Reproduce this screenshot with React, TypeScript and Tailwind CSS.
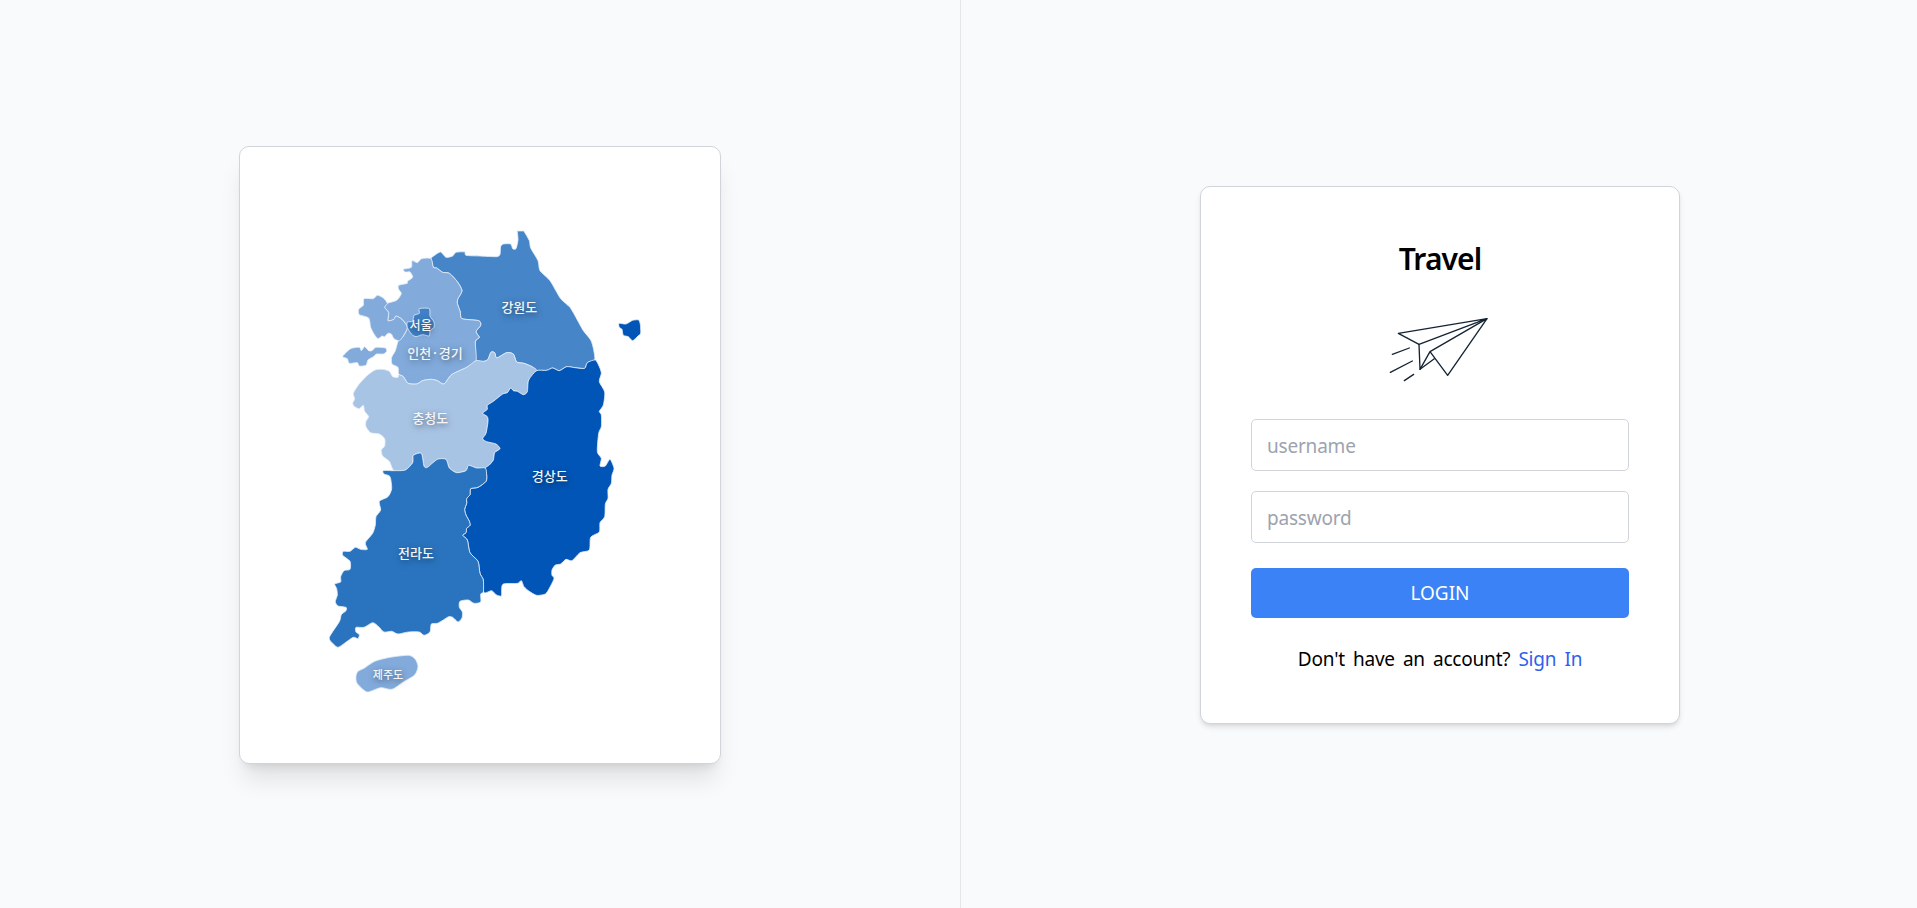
import React from "react";

type Point = [number, number];

const parse = (s: string): Point[] =>
  s.split(" ").map((p) => p.split(",").map(Number) as Point);

// Closed curve through all points, with slightly rounded corners.
const outline = (s: string): string => {
  const p = parse(s);
  const n = p.length;
  const k = 0.12;
  let d = `M${p[0][0]} ${p[0][1]}`;
  for (let i = 0; i < n; i++) {
    const a = p[(i + n - 1) % n];
    const b = p[i];
    const c = p[(i + 1) % n];
    const e = p[(i + 2) % n];
    d += `C${b[0] + (c[0] - a[0]) * k} ${b[1] + (c[1] - a[1]) * k} ${c[0] - (e[0] - b[0]) * k} ${c[1] - (e[1] - b[1]) * k} ${c[0]} ${c[1]}`;
  }
  return d + "Z";
};

const regions = [
  {
    id: "gangwon",
    fill: "#4685c8",
    points:
      "333,114 345,105 362,96 378,112 398,108 408,97 434,96 438,106 478,108 530,110 540,103 542,80 550,72 572,72 578,86 588,86 594,60 592,34 594,33 610,33 612,34 628,62 632,84 654,122 660,152 690,182 722,236 750,262 772,300 790,332 812,360 820,385 824,420 802,428 794,445 765,443 740,440 718,452 698,444 680,451 650,452 636,440 612,430 590,426 580,402 560,398 535,412 528,412 524,398 514,396 508,408 504,418 492,424 468,422 466,365 478,352 468,335 482,316 476,302 426,296 421,276 412,250 414,236 426,212 412,185 388,160 368,157 350,144 340,142 333,114",
  },
  {
    id: "gyeonggi",
    fill: "#82abdc",
    points:
      "333,116 305,116 292,128 276,122 274,142 250,148 256,156 270,156 278,172 262,184 262,190 236,196 236,208 244,220 238,232 228,242 202,250 194,262 206,278 204,302 222,298 228,288 246,298 262,322 250,348 235,362 226,392 215,412 216,432 234,442 236,462 250,470 264,490 290,492 308,482 332,478 352,482 372,492 395,464 440,442 468,422 466,365 478,352 468,335 482,316 476,302 426,296 421,276 412,250 414,236 426,212 412,185 388,160 368,157 350,144 340,142",
  },
  {
    id: "incheon",
    fill: "#82abdc",
    points:
      "202,250 190,234 172,226 160,236 132,236 130,256 116,268 118,284 146,294 152,322 162,342 174,356 186,348 194,350 204,340 214,342 222,356 238,362 250,348 262,322 246,298 228,288 222,298 204,302 206,278 194,262",
  },
  {
    id: "incheon-islands",
    fill: "#82abdc",
    points:
      "70,406 92,386 118,382 124,392 134,380 146,392 156,392 168,382 196,384 200,394 190,402 170,402 160,410 144,420 138,436 118,438 112,428 88,430 82,416 70,412",
  },
  {
    id: "seoul",
    fill: "#3f80c6",
    points:
      "262,306 278,304 282,286 298,280 298,266 328,266 330,288 342,306 342,322 330,332 328,348 308,344 288,350 274,342 262,322",
  },
  {
    id: "chungcheong",
    fill: "#a8c4e5",
    points:
      "188,448 165,450 140,468 116,494 100,520 104,536 98,550 104,560 118,566 130,556 134,574 146,590 138,604 138,620 152,638 178,642 194,656 194,678 184,690 188,708 208,724 222,752 256,750 278,728 280,706 304,700 312,738 322,742 352,718 378,718 388,744 410,758 438,752 446,736 470,744 496,744 508,735 520,720 524,698 540,686 528,672 500,665 488,656 498,640 504,605 502,590 488,580 502,568 502,556 520,544 548,522 562,518 572,504 580,512 592,514 610,524 622,515 626,480 650,452 636,440 612,430 590,426 580,402 560,398 535,412 528,412 524,398 514,396 508,408 504,418 492,424 468,422 440,442 395,464 372,492 352,482 332,478 308,482 290,492 264,490 250,470 236,464 234,472 218,470 208,454",
  },
  {
    id: "gyeongsang",
    fill: "#0055b6",
    points:
      "826,420 838,440 844,460 838,485 854,516 850,555 838,574 844,585 844,620 836,640 832,695 844,715 840,738 856,738 870,718 882,745 876,765 874,790 864,808 864,835 856,852 854,890 840,908 838,936 812,952 808,990 780,998 756,1022 738,1018 722,1032 706,1035 696,1050 696,1066 702,1076 688,1105 676,1122 650,1126 628,1114 612,1100 604,1082 592,1090 550,1092 545,1108 544,1128 528,1124 515,1112 492,1118 490,1080 480,1060 474,1024 450,998 442,960 428,946 438,938 440,925 450,916 448,904 438,885 434,868 440,850 440,836 450,824 452,806 474,802 498,784 500,765 496,744 508,735 520,720 524,698 540,686 528,672 500,665 488,656 498,640 504,605 502,590 488,580 502,568 502,556 520,544 548,522 562,518 572,504 580,512 592,514 610,524 622,515 626,480 650,452 680,451 698,444 718,452 740,440 765,443 794,445 802,428",
  },
  {
    id: "ulleung",
    fill: "#0055b6",
    points:
      "897,310 918,312 938,301 956,300 961,314 962,340 954,348 938,362 925,350 910,346 906,328 898,322",
  },
  {
    id: "jeolla",
    fill: "#2a74bf",
    points:
      "190,752 222,752 256,750 278,728 280,706 304,700 312,738 322,742 352,718 378,718 388,744 410,758 438,752 446,736 470,744 496,744 500,765 498,784 474,802 452,806 450,824 440,836 440,850 434,868 438,885 448,904 450,916 440,925 438,938 428,946 442,960 450,998 474,1024 480,1060 490,1080 490,1116 482,1122 482,1146 462,1150 445,1140 420,1144 418,1162 427,1176 426,1194 414,1206 398,1192 386,1190 370,1200 352,1210 334,1212 330,1236 312,1246 298,1236 265,1236 234,1242 215,1234 192,1236 176,1220 158,1208 132,1222 108,1222 108,1236 118,1244 114,1256 100,1252 76,1268 54,1282 38,1270 28,1252 58,1205 64,1184 78,1172 78,1162 54,1158 46,1145 52,1125 50,1106 44,1092 62,1086 62,1070 72,1052 90,1048 90,1024 68,1006 70,994 90,994 106,982 122,988 142,988 136,968 158,940 166,915 168,890 182,870 178,844 204,830 215,806 210,770 192,762",
  },
  {
    id: "jeju",
    fill: "#82abdc",
    points:
      "108,1368 114,1354 132,1345 164,1324 210,1312 266,1306 286,1318 294,1340 284,1365 250,1386 216,1408 182,1403 145,1416 130,1409 110,1388",
  },
];

const labels = [
  { text: "강원도", x: 598, y: 276, size: 39 },
  { text: "서울", x: 302, y: 331, size: 36 },
  { text: "인천·경기", x: 345, y: 413, size: 39 },
  { text: "충청도", x: 331, y: 610, size: 39 },
  { text: "경상도", x: 689, y: 782, size: 39 },
  { text: "전라도", x: 288, y: 1013, size: 39 },
  { text: "제주도", x: 204, y: 1378, size: 33 },
];

function KoreaMap() {
  return (
    <svg viewBox="-240 -219 1440 1848" className="h-[616px] w-[480px]">
      {regions.map((r) => (
        <path
          key={r.id}
          d={outline(r.points)}
          fill={r.fill}
          stroke="#e4eefa"
          strokeOpacity={0.8}
          strokeWidth={3}
          strokeLinejoin="round"
        />
      ))}
      {labels.map((l) => (
        <text
          key={l.text}
          x={l.x}
          y={l.y}
          fontSize={l.size}
          textAnchor="middle"
          fill="#f5f5f5"
          className="font-['Noto_Sans_CJK_KR',sans-serif] font-medium [text-shadow:1px_2px_6px_rgba(0,0,0,0.5)]"
        >
          {l.text}
        </text>
      ))}
    </svg>
  );
}

function PaperPlane() {
  return (
    <svg
      viewBox="60 250 300 210"
      className="h-[70px] w-[100px] overflow-visible"
      fill="none"
      stroke="#142433"
      strokeWidth={4}
      strokeLinejoin="round"
      strokeLinecap="round"
    >
      <path d="M351 267 85 311 147 344Z" />
      <path d="M147 344 150 419 180 366 351 267 233 437 180 366" />
      <path d="M150 419 193 387" />
      <path d="M67 374 118 355M61 428 127 394M103 453 131 434" />
    </svg>
  );
}

const field =
  "h-[52px] w-full rounded-[5px] border border-[#d1d5db] bg-white px-[15px] pt-px text-[19px] tracking-[-0.2px] placeholder:text-[#9ca3af] outline-none";

export default function App() {
  return (
    <div className="flex h-screen w-full bg-[#f9fafb] font-['Noto_Sans','Noto_Sans_CJK_KR',sans-serif] text-black">
      <section className="flex w-[961px] shrink-0 items-center justify-center border-r border-[#e5e7eb]">
        <div className="mt-px rounded-[10px] border border-[#d1d5db] bg-white shadow-xl">
          <KoreaMap />
        </div>
      </section>
      <main className="flex flex-1 items-center justify-center">
        <div className="mt-[2px] ml-[2px] flex h-[538px] w-[480px] flex-col items-center rounded-[10px] border border-[#d1d5db] bg-white px-[50px] pt-[54px] shadow-md">
          <h1 className="text-[30px] leading-9 font-semibold tracking-[-0.9px]">Travel</h1>
          <div className="mt-9">
            <PaperPlane />
          </div>
          <form className="mt-9 flex w-full flex-col" onSubmit={(e) => e.preventDefault()}>
            <input className={field} type="text" placeholder="username" />
            <input className={`${field} mt-5`} type="password" placeholder="password" />
            <button
              type="submit"
              className="mt-[25px] h-[50px] w-full rounded-[5px] bg-[#3b82f6] pt-px text-[19px] text-white"
            >
              LOGIN
            </button>
          </form>
          <p className="mt-[27px] text-[19px] leading-7 tracking-[-0.2px] whitespace-nowrap [word-spacing:3.3px]">
            Don't have an account?{" "}
            <a className="text-[#2f5fec]" href="#">
              Sign In
            </a>
          </p>
        </div>
      </main>
    </div>
  );
}
